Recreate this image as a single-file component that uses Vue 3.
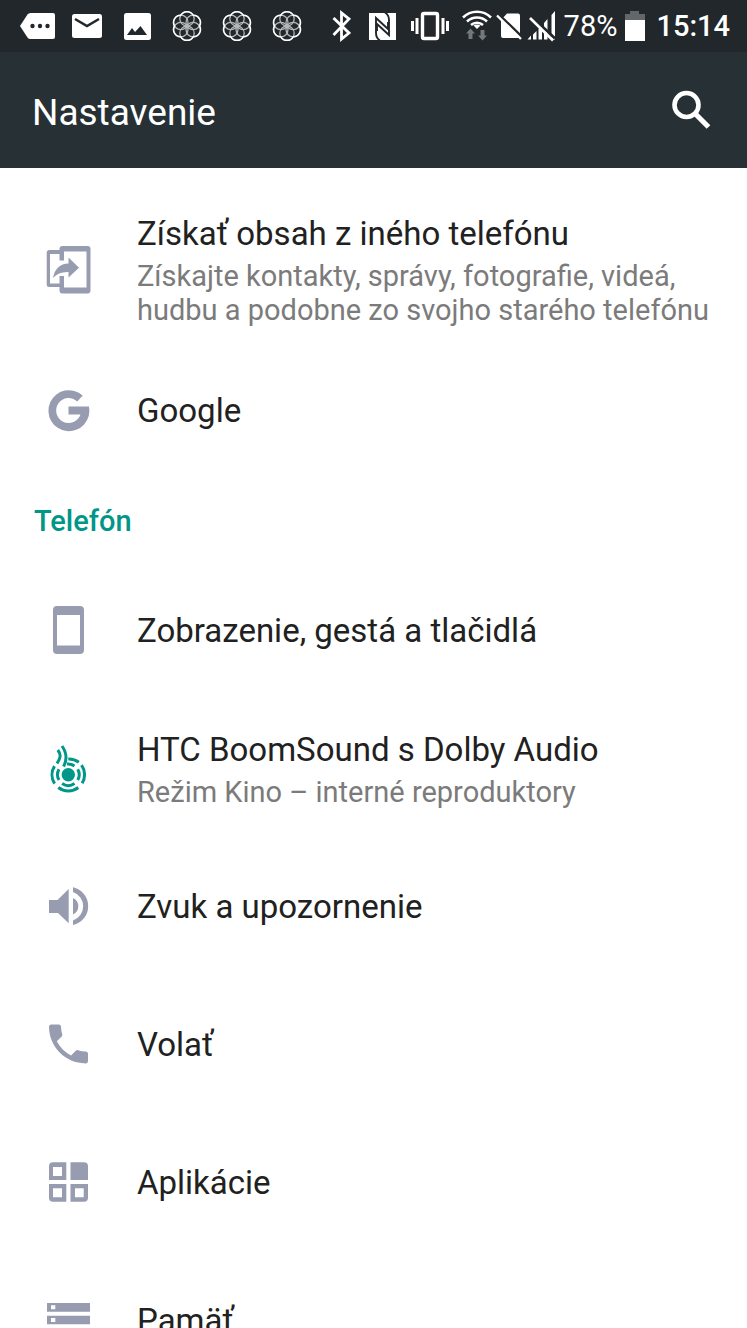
<template>
    <div class="screen">
        <div class="status">
            <div class="notifications">
                <svg class="notice" viewBox="0 0 50 52">
                    <path d="M8 26 15.500 14.500Q16.500 13 18.500 13H41Q43 13 43 15V37Q43 39 41 39H18.500Q16.500 39 15.500 37.500Z" fill="#fff" />
                    <g fill="#22272b">
                        <circle cx="20.500" cy="26" r="2.200" />
                        <circle cx="28" cy="26" r="2.200" />
                        <circle cx="35.500" cy="26" r="2.200" />
                    </g>
                </svg>
                <svg class="notice" viewBox="0 0 50 52">
                    <rect x="10" y="14" width="30" height="24" rx="2.500" fill="#fff" />
                    <path d="M13 19 25 26 37 19" fill="none" stroke="#22272b" stroke-width="2.600" />
                </svg>
                <svg class="notice" viewBox="0 0 50 52">
                    <rect x="12" y="13" width="27" height="27" rx="2.500" fill="#fff" />
                    <path d="M15 35 20 28 23 32 28.500 26 35 35Z" fill="#22272b" />
                </svg>
                <svg v-for="n in 3" :key="n" class="notice" viewBox="-25 -26 50 52" fill="none">
                    <g stroke="#b4b7b9" stroke-width="1.300">
                        <circle cx="0" cy="-7.200" r="7.200" />
                        <circle cx="6.200" cy="-3.600" r="7.200" />
                        <circle cx="6.200" cy="3.600" r="7.200" />
                        <circle cx="0" cy="7.200" r="7.200" />
                        <circle cx="-6.200" cy="3.600" r="7.200" />
                        <circle cx="-6.200" cy="-3.600" r="7.200" />
                    </g>
                    <path
                        d="M12.500 0A7.200 7.200 0 0 1 6.200 10.800A7.200 7.200 0 0 1-6.200 10.800A7.200 7.200 0 0 1-12.500 0A7.200 7.200 0 0 1-6.200-10.800A7.200 7.200 0 0 1 6.200-10.800A7.200 7.200 0 0 1 12.500 0Z"
                        stroke="#fff" stroke-width="1.500" />
                </svg>
            </div>
            <div class="system">
                <svg width="40" height="52" viewBox="0 0 40 52">
                    <path d="M11.500 18 27 33 19.500 39V13L27 19 11.500 35" fill="none" stroke="#fff" stroke-width="2.800" />
                </svg>
                <svg width="42" height="52" viewBox="0 0 42 52">
                    <rect x="7" y="13" width="27" height="27" fill="#fff" />
                    <path d="M18 40.500Q14 38 14 33V18L26 29V22M23 12.500Q27 15 27 20V35L15 24V31" fill="none" stroke="#22272b" stroke-width="1.900" />
                </svg>
                <svg width="52" height="52" viewBox="0 0 52 52">
                    <rect x="18.500" y="13.500" width="15" height="25" rx="1.500" fill="none" stroke="#fff" stroke-width="3.400" />
                    <path d="M7 21h3v10H7zM11.500 18h3v16h-3zM37.500 18h3v16h-3zM42 21h3v10h-3z" fill="#fff" />
                </svg>
                <svg width="38" height="52" viewBox="0 0 38 52">
                    <g fill="none" stroke="#fff" stroke-width="2.500">
                        <path d="M7 17.500A20 20 0 0 1 35 17.500" />
                        <path d="M11 21.500A14.500 14.500 0 0 1 31 21.500" />
                        <path d="M15 25A9 9 0 0 1 27 25" />
                    </g>
                    <path d="M17.500 25.500Q21 23.500 24.500 25.500L21 29Z" fill="#fff" />
                    <path d="M14.500 28.500l4.500 5h-2.500v5.500h-4v-5.500H10zM26.500 40.500l4.500-5h-2.500v-5.500h-4v5.500H22z" fill="#74787b" />
                </svg>
                <svg width="31" height="52" viewBox="0 0 31 52">
                    <path d="M7 20 13 13.500H24Q26 13.500 26 15.500V38H9Q7 38 7 36Z" fill="#fff" />
                    <path d="M4 14 29 38" stroke="#22272b" stroke-width="3" />
                    <path d="M3 15.500 27 39" stroke="#fff" stroke-width="2.400" />
                </svg>
                <svg width="34" height="52" viewBox="0 0 34 52">
                    <path d="M2.500 39.500 6 35.500V39.500ZM8 34.500 11.500 31V39.500H8ZM13.500 29 17 25.500V39.500H13.500ZM19 23 22.500 19V39.500H19ZM26.500 15 30 11V39.500H26.500Z" fill="#fff" />
                    <path d="M6 16 30 38.500" stroke="#22272b" stroke-width="3" />
                    <path d="M5 18 28 40.500" stroke="#fff" stroke-width="2.600" />
                </svg>
                <span class="percent">{{ battery }}%</span>
                <svg width="20" height="52" viewBox="0 0 20 52">
                    <path d="M5 11h9v3h6v6H0v-6h5z" fill="#63676a" />
                    <path d="M0 20h20v21H0z" fill="#fff" />
                </svg>
                <time class="time">15:14</time>
            </div>
        </div>

        <header class="appbar">
            <h1>Nastavenie</h1>
            <button type="button" class="search" aria-label="Hľadať">
                <svg width="48" height="48" viewBox="0 0 48 48" fill="none" stroke="#fff">
                    <circle cx="19.500" cy="19" r="12" stroke-width="4.600" />
                    <path d="M28 27.500 41.500 41" stroke-width="5.200" />
                </svg>
            </button>
        </header>

        <main class="list">
            <section v-for="group in groups" :key="group.title">
                <h2 v-if="group.title">{{ group.title }}</h2>
                <a v-for="item in group.items" :key="item.title" href="#" class="row" :class="{ tall: item.tall }">
                    <svg class="icon" :class="{ accent: item.accent }" viewBox="0 0 48 48">
                        <path v-if="item.fill" :d="item.fill" fill="currentColor" fill-rule="evenodd" />
                        <path v-if="item.line" :d="item.line" fill="none" stroke="currentColor" stroke-width="3" />
                    </svg>
                    <span class="text">
                        <span class="title">{{ item.title }}</span>
                        <span v-if="item.note" class="note">{{ item.note }}</span>
                    </span>
                </a>
            </section>
        </main>
    </div>
</template>

<script setup>
import { ref } from 'vue';

const battery = ref(78);

const groups = [
    {
        title: '',
        items: [
            {
                title: 'Získať obsah z iného telefónu',
                note: 'Získajte kontakty, správy, fotografie, videá, hudbu a podobne zo svojho starého telefónu',
                tall: true,
                fill: 'M14.5 14.500V3Q14.500 0 17.500 0H42.500Q45.500 0 45.500 3V44.500Q45.500 47.500 42.500 47.500H17.500Q14.500 47.500 14.500 44.500V30H19V41.500H41.500V5.500H19V14.500ZM14.500 4H4Q1.700 4 1.700 6.500V38.500Q1.700 41 4 41H14.500V37.500H5V8H14.500ZM8 32Q10.500 18 23.500 17.500V11.500L34 21.700 23.500 31.500V26Q13.500 25.500 8 32Z',
            },
            {
                title: 'Google',
                fill: 'M37.7 8.500A20.500 20.500 0 1 0 44 19.500H23.500V27.500H35.500A12.500 12.500 0 1 1 32.300 14.500Z',
            },
        ],
    },
    {
        title: 'Telefón',
        items: [
            {
                title: 'Zobrazenie, gestá a tlačidlá',
                fill: 'M12 -1H35Q39 -1 39 3V43Q39 47 35 47H12Q8 47 8 43V3Q8 -1 12 -1ZM12 8V38.500H35V8Z',
            },
            {
                title: 'HTC BoomSound s Dolby Audio',
                note: 'Režim Kino – interné reproduktory',
                accent: true,
                fill: 'M16.6 29.700a6.700 6.700 0 1 0 13.400 0a6.700 6.700 0 1 0-13.400 0z',
                line: 'M36.5 20.100A16.300 16.300 0 0 1 37.100 38.300M9.500 21.100A16.300 16.300 0 0 0 9.600 38.600M13.300 42.500A16.300 16.300 0 0 0 33.300 42.500M23.300 13.900A16 16 0 0 1 33.800 17.200M14 24.300A10.800 10.800 0 0 0 14 35.100M32.700 24.300A10.800 10.800 0 0 1 32.700 35.100M22 19A10.800 10.800 0 0 1 29.500 20.900M17.100 38.500A10.800 10.800 0 0 0 29.500 38.500M17 1C22 8 22 15 18.500 21.500M12.800 5C16.500 10 15.500 13 12 18.500',
            },
            {
                title: 'Zvuk a upozornenie',
                fill: 'M4 17H12.500L23.700 6V40.300L13 30H4ZM28 15Q33.300 17.500 33.300 23.200T28 31.500ZM28 4.300A19.300 19.300 0 0 1 28 42V37.400A15 15 0 0 0 28 9Z',
            },
            {
                title: 'Volať',
                fill: 'M11.8 20.200C14.900 26.300 19.900 31.300 26 34.500L30.800 29.700C31.400 29.100 32.200 28.900 33 29.200C35.400 30 38 30.400 40.700 30.400C41.900 30.400 43 31.400 43 32.600V40.200C43 41.400 41.900 42.400 40.700 42.400C20.400 42.400 4 26 4 5.600C4 4.400 5 3.400 6.200 3.400H13.800C15 3.400 16 4.400 16 5.600C16 8.300 16.400 10.900 17.200 13.300C17.500 14.100 17.300 15 16.700 15.500Z',
            },
            {
                title: 'Aplikácie',
                fill: 'M8 3.300H21.300V21H4V7.300Q4 3.300 8 3.300ZM8 8V17H17V8ZM25.500 3.300H39Q43 3.300 43 7.300V21H25.500ZM4 25H21.300V42.700H8Q4 42.700 4 38.700ZM8 29.300V38.300H17V29.300ZM25.500 25H43V38.700Q43 42.700 39 42.700H25.500ZM30 29.300V38.300H38.700V29.300Z',
            },
            {
                title: 'Pamäť',
                fill: 'M2 6H45V14.700H2ZM6 8.300V12.300H10.300V8.300ZM2 18.700H45V27.300H2ZM6 21V25H10.300V21ZM2 31.300H45V40H2ZM6 33.700V37.700H10.300V33.700Z',
            },
        ],
    },
];
</script>

<style>
body {
    margin: 0;
    background: #fff;
}
</style>

<style scoped>
.screen {
    display: flex;
    flex-direction: column;
    height: 100vh;
    overflow: hidden;
    font-family: Roboto, 'Noto Sans', sans-serif;
    color: #212121;
}

.status {
    display: flex;
    flex: none;
    justify-content: space-between;
    height: 52px;
    padding: 0 17px 0 12px;
    background: #22272b;
    color: #fff;
}

.notifications,
.system {
    display: flex;
    align-items: center;
}

.notice {
    width: 50px;
    height: 52px;
}

.percent {
    margin: 0 8px 0 5px;
    font-size: 29px;
    line-height: 54px;
}

.time {
    margin-left: 11px;
    font-size: 29px;
    font-weight: 500;
    line-height: 54px;
}

.appbar {
    display: flex;
    flex: none;
    align-items: center;
    justify-content: space-between;
    height: 116px;
    padding: 0 32px;
    background: #263035;
    color: #fff;
}

h1 {
    margin: 0;
    padding-top: 4px;
    font-size: 37px;
    font-weight: 400;
}

.search {
    display: flex;
    padding: 0;
    border: 0;
    background: none;
}

.list {
    flex: 1;
    min-height: 0;
    padding-top: 30px;
    overflow-y: auto;
    scrollbar-width: none;
}

h2 {
    margin: 0;
    padding-left: 34px;
    font-size: 29px;
    font-weight: 500;
    line-height: 82px;
    color: #009688;
}

.row {
    display: flex;
    align-items: center;
    gap: 44px;
    min-height: 138px;
    padding: 0 32px 0 45px;
    color: inherit;
    text-decoration: none;
}

.tall {
    min-height: 144px;
}

.icon {
    flex: none;
    width: 48px;
    height: 48px;
    overflow: visible;
    color: #989cb0;
}

.accent {
    color: #009688;
}

.text {
    display: flex;
    flex-direction: column;
    gap: 4px;
}

.title {
    font-size: 33px;
    line-height: 42px;
}

.note {
    font-size: 29px;
    line-height: 34px;
    color: #7b7b7b;
}
</style>
